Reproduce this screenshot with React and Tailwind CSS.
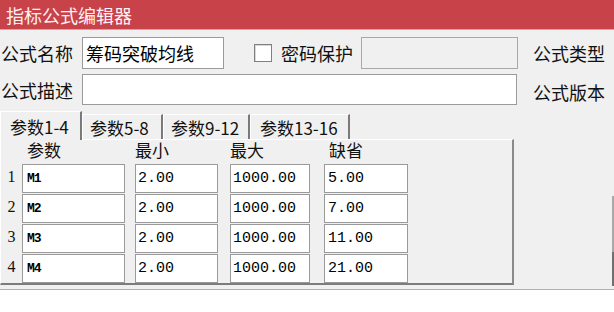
import React from 'react';

const rows = [
  { n: '1', name: 'M1', min: '2.00', max: '1000.00', def: '5.00' },
  { n: '2', name: 'M2', min: '2.00', max: '1000.00', def: '7.00' },
  { n: '3', name: 'M3', min: '2.00', max: '1000.00', def: '11.00' },
  { n: '4', name: 'M4', min: '2.00', max: '1000.00', def: '21.00' },
];

const tabs = [
  { label: '参数1-4', w: 'w-[82px]', pl: 'pl-[9px]' },
  { label: '参数5-8', w: 'w-[81px]', pl: 'pl-[7px]' },
  { label: '参数9-12', w: 'w-[87px]', pl: 'pl-[7px]' },
  { label: '参数13-16', w: 'w-[100px]', pl: 'pl-[9px]' },
];

function Cell({ w, ml, pl, children, bold }) {
  return (
    <div
      className={`${w} ${ml} ${pl} h-[29px] bg-white border border-[#9a9a9a] flex items-center text-black ${
        bold
          ? "font-['Liberation_Mono',monospace] font-bold text-[13px] tracking-[-1px]"
          : "font-['Liberation_Mono',monospace] text-[15px]"
      }`}
    >
      {children}
    </div>
  );
}

export default function App() {
  return (
    <div className="w-[614px] h-[312px] overflow-hidden bg-[#f0f0f0] flex flex-col font-['Noto_Sans_CJK_SC',sans-serif] text-[18px] leading-none text-[#111]">
      {/* title bar */}
      <div className="h-[30px] shrink-0 bg-[#c8424a] border-b border-[#e89aa0] text-[#fff2f2] flex items-center pl-[6px]">
        指标公式编辑器
      </div>

      {/* name row */}
      <div className="flex items-center mt-[7px] h-[32px] shrink-0">
        <div className="w-[82px] pl-[1px]">公式名称</div>
        <div className="w-[142px] h-[32px] bg-white border border-[#9a9a9a] flex items-center pl-[3px] text-black">
          筹码突破均线
        </div>
        <div className="ml-[30px] w-[18px] h-[18px] bg-white border border-[#808080] shadow-[inset_1px_1px_0_#d8d8d8]" />
        <div className="ml-[9px]">密码保护</div>
        <div className="ml-[8px] w-[157px] h-[32px] bg-[#f0f0f0] border border-[#a8a8a8]" />
        <div className="ml-[15px]">公式类型</div>
      </div>

      {/* description row */}
      <div className="flex items-center mt-[5px] h-[31px] shrink-0">
        <div className="w-[82px] pl-[1px]">公式描述</div>
        <div className="w-[435px] h-[31px] bg-white border border-[#9a9a9a]" />
        <div className="ml-[16px] pt-[5px]">公式版本</div>
      </div>

      {/* params */}
      <div className="flex mt-[6px] h-[174px] shrink-0">
        <div className="w-[514px] flex flex-col">
          <div className="flex items-end h-[28px] text-[17px]">
            {tabs.map((t, i) => (
              <div
                key={t.label}
                className={`${t.w} ${t.pl} flex items-center border-t border-l border-white border-r-2 border-r-[#7a7a7a] ${
                  i === 0 ? 'h-[29px] -mb-[1px] bg-[#f0f0f0] relative z-10' : 'h-[25px]'
                }`}
              >
                {t.label}
              </div>
            ))}
          </div>
          <div className="h-[146px] border-t border-l border-white border-r-2 border-b-2 border-r-[#8a8a8a] border-b-[#7c7c7c] flex flex-col">
            <div className="flex h-[24px] text-[17px] leading-[20px]">
              <div className="w-[21px]" />
              <div className="w-[103px] pl-[5px]">参数</div>
              <div className="w-[83px] ml-[10px]">最小</div>
              <div className="w-[80px] ml-[12px]">最大</div>
              <div className="w-[84px] ml-[14px] pl-[5px]">缺省</div>
            </div>
            <div className="flex flex-col gap-[1px]">
              {rows.map((r) => (
                <div key={r.n} className="flex items-center">
                  <div className="w-[21px] text-center pb-[3px] font-['Liberation_Serif',serif] text-[16px]">
                    {r.n}
                  </div>
                  <Cell w="w-[103px]" ml="" pl="pl-[4px]" bold>
                    {r.name}
                  </Cell>
                  <Cell w="w-[83px]" ml="ml-[10px]" pl="pl-[2px]">
                    {r.min}
                  </Cell>
                  <Cell w="w-[80px]" ml="ml-[12px]" pl="pl-[2px]">
                    {r.max}
                  </Cell>
                  <Cell w="w-[84px]" ml="ml-[14px]" pl="pl-[3px]">
                    {r.def}
                  </Cell>
                </div>
              ))}
            </div>
          </div>
        </div>
        <div className="flex-1" />
        <div className="w-[2px] flex flex-col">
          <div className="h-[85px] shrink-0" />
          <div className="h-[56px] shrink-0 bg-[#a8a8a8]" />
          <div className="h-[34px] shrink-0 bg-[#707070]" />
        </div>
      </div>

      {/* bottom edit area */}
      <div className="mt-[4px] flex-1 bg-white border-t border-[#b0b0b0]" />
    </div>
  );
}
